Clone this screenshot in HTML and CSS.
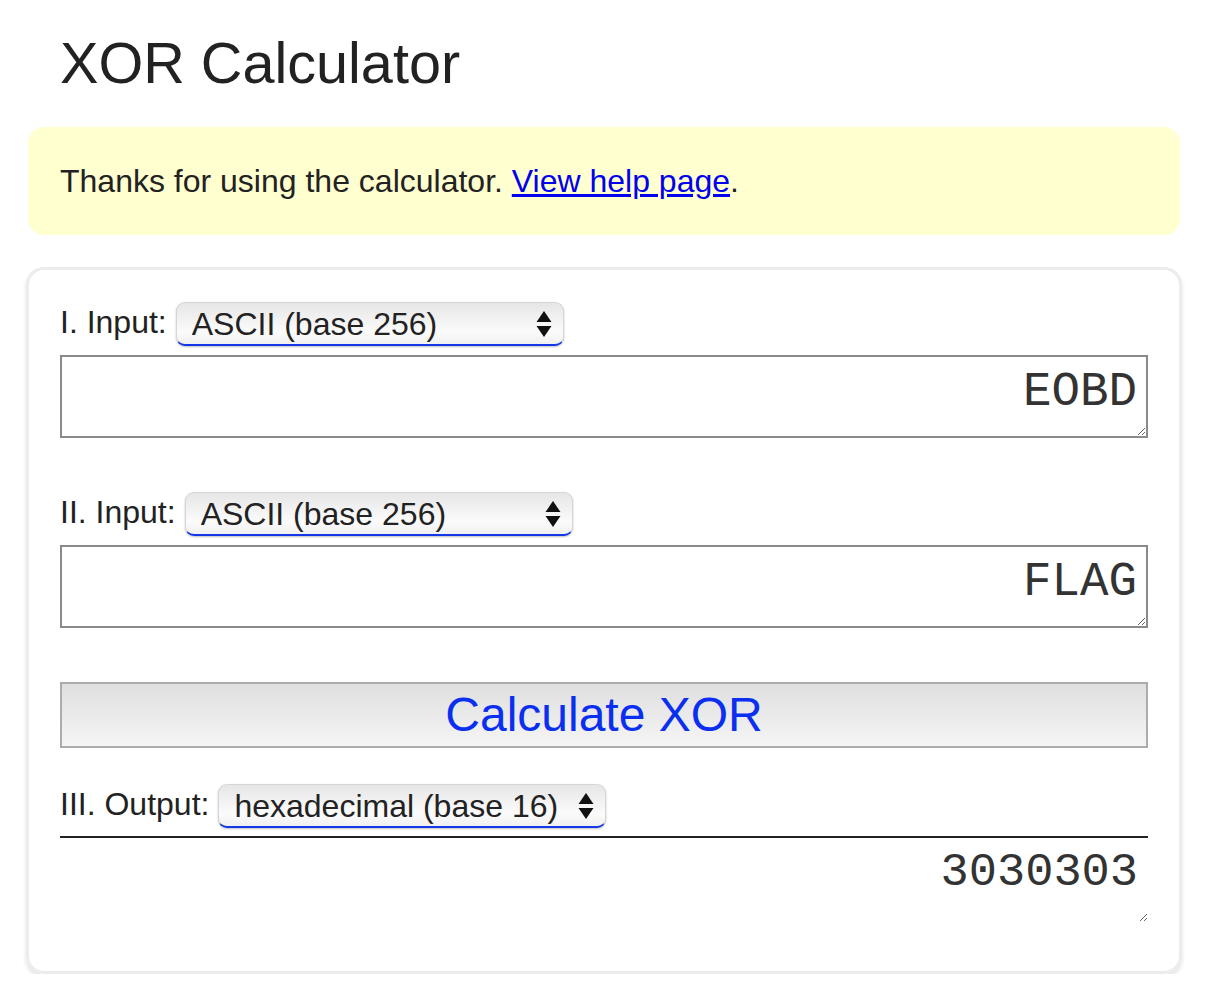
FILE: index.html
```html
<!DOCTYPE html>
<html lang="en">
<head>
<meta charset="utf-8">
<title>XOR Calculator</title>
<link rel="stylesheet" href="styles.css">
</head>
<body>
<div class="page">
  <h1 class="title">XOR Calculator</h1>
  <div class="notice">Thanks for using the calculator. <a href="#" class="link">View help page</a>.</div>
  <div class="card">
    <div class="row">
      <span class="label">I. Input:</span>
      <select class="sel"><option>ASCII (base 256)</option><option>hexadecimal (base 16)</option></select>
    </div>
    <textarea class="input">EOBD</textarea>
    <div class="row row-gap">
      <span class="label">II. Input:</span>
      <select class="sel"><option>ASCII (base 256)</option><option>hexadecimal (base 16)</option></select>
    </div>
    <textarea class="input">FLAG</textarea>
    <button class="calc">Calculate XOR</button>
    <div class="row row-out">
      <span class="label">III. Output:</span>
      <select class="sel"><option>hexadecimal (base 16)</option><option>ASCII (base 256)</option></select>
    </div>
    <textarea class="output">3030303</textarea>
  </div>
</div>
</body>
</html>
```

FILE: styles.css
```css
html, body {
  margin: 0;
  padding: 0;
  background: #fff;
}
body {
  font-family: "Liberation Sans", Arial, sans-serif;
  color: #222;
}
.page {
  width: 1156px;
  padding: 0 26px;
}
.title {
  margin: 30px 0 0 0;
  padding-left: 34px;
  font-size: 57.6px;
  font-weight: normal;
  line-height: normal;
  color: #222;
}
.notice {
  margin: 31px 2px 0 2px;
  background: #ffffd0;
  border-radius: 16px;
  padding: 30px 32px;
  font-size: 32px;
  line-height: 48px;
}
.link {
  color: #0000ee;
  text-decoration: underline;
}
.card {
  margin-top: 32px;
  border: 3px solid #ececec;
  border-radius: 18px;
  box-shadow: 0 3px 4px rgba(0, 0, 0, 0.12);
  padding: 32px 31px 49px 31px;
}
.row {
  display: flex;
  align-items: center;
  gap: 9px;
  height: 44px;
}
.row-gap {
  margin-top: 54px;
}
.row-out {
  margin-top: 36px;
}
.label {
  font-size: 32px;
  line-height: 44px;
  position: relative;
  top: -2px;
}
.sel {
  appearance: none;
  -webkit-appearance: none;
  width: 388px;
  height: 44px;
  box-sizing: border-box;
  padding: 0 48px 0 15px;
  font-family: "Liberation Sans", Arial, sans-serif;
  font-size: 32px;
  color: #222;
  border: 1px solid #d6d6d6;
  border-bottom: 2px solid #1438e8;
  border-radius: 9px;
  background-color: #f2f2f2;
  background-image: url("data:image/svg+xml;utf8,<svg xmlns='http://www.w3.org/2000/svg' width='16' height='28' viewBox='0 0 16 28'><path d='M8 1 L15.5 12 L0.5 12 Z' fill='%23111'/><path d='M0.5 16 L15.5 16 L8 27 Z' fill='%23111'/></svg>"), linear-gradient(#e6e6e6, #fbfbfb 70%, #f0f0f0);
  background-repeat: no-repeat, no-repeat;
  background-position: right 11px center, 0 0;
  background-size: 16px 28px, 100% 100%;
  box-shadow: 0 1px 2px rgba(0, 0, 0, 0.25);
}
.input {
  display: block;
  box-sizing: border-box;
  width: 100%;
  height: 83px;
  margin-top: 9px;
  border: 2px solid #8a8a8a;
  padding: 8px 9px 0 8px;
  font-family: "Liberation Mono", "Courier New", monospace;
  font-size: 47.5px;
  text-align: right;
  color: #333;
  background: #fff;
  resize: vertical;
}
.calc {
  display: block;
  box-sizing: border-box;
  width: 100%;
  height: 66px;
  margin-top: 54px;
  border: 2px solid #acacac;
  background: linear-gradient(#dfdfdf, #f5f5f5);
  font-family: "Liberation Sans", Arial, sans-serif;
  font-size: 48px;
  color: #0a2ff0;
  padding: 0;
  line-height: 1;
}
.output {
  display: block;
  box-sizing: border-box;
  width: 100%;
  height: 86px;
  margin-top: 8px;
  border: 0;
  border-top: 2px solid #222;
  padding: 8px 10px 0 8px;
  font-family: "Liberation Mono", "DejaVu Sans Mono", monospace;
  font-size: 47px;
  text-align: right;
  color: #333;
  background: #fff;
  resize: vertical;
}
```
